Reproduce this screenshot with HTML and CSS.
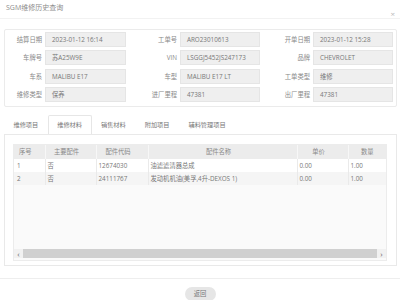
FILE: index.html
```html
<!doctype html>
<html lang="zh-CN">

<head>
    <meta charset="utf-8" />
    <title>SGM维修历史查询</title>
    <link rel="stylesheet" href="styles.css">
</head>

<body>
    <div class="dialog">
        <div class="dlg-head">
            <span class="dlg-title">SGM维修历史查询</span>
            <span class="dlg-close">&times;</span>
        </div>

        <div class="dlg-body">
            <!-- order info -->
            <div class="info-panel">
                <div class="field f1"><label>结算日期</label><div class="val">2023-01-12 16:14</div></div>
                <div class="field f2"><label>工单号</label><div class="val">ARO23010613</div></div>
                <div class="field f3"><label>开单日期</label><div class="val">2023-01-12 15:28</div></div>

                <div class="field f1"><label>车牌号</label><div class="val">苏A25W9E</div></div>
                <div class="field f2"><label>VIN</label><div class="val">LSGGJ5452JS247173</div></div>
                <div class="field f3"><label>品牌</label><div class="val">CHEVROLET</div></div>

                <div class="field f1"><label>车系</label><div class="val">MALIBU E17</div></div>
                <div class="field f2"><label>车型</label><div class="val">MALIBU E17 LT</div></div>
                <div class="field f3"><label>工单类型</label><div class="val">维修</div></div>

                <div class="field f1"><label>维修类型</label><div class="val">保养</div></div>
                <div class="field f2"><label>进厂里程</label><div class="val">47381</div></div>
                <div class="field f3"><label>出厂里程</label><div class="val">47381</div></div>
            </div>

            <!-- tabs -->
            <div class="tabs">
                <div class="tab">维修项目</div>
                <div class="tab active">维修材料</div>
                <div class="tab">销售材料</div>
                <div class="tab">附加项目</div>
                <div class="tab">辅料管理项目</div>
            </div>

            <div class="tab-pane">
                <div class="grid-wrap">
                    <table class="grid">
                        <colgroup>
                            <col class="c-no">
                            <col class="c-main">
                            <col class="c-code">
                            <col class="c-name">
                            <col class="c-price">
                            <col class="c-qty">
                        </colgroup>
                        <thead>
                            <tr>
                                <th class="h-no">序号</th>
                                <th>主要配件</th>
                                <th>配件代码</th>
                                <th>配件名称</th>
                                <th>单价</th>
                                <th class="h-qty">数量</th>
                            </tr>
                        </thead>
                        <tbody>
                            <tr>
                                <td>1</td>
                                <td>否</td>
                                <td>12674030</td>
                                <td>油滤滤清器总成</td>
                                <td>0.00</td>
                                <td>1.00</td>
                            </tr>
                            <tr class="alt">
                                <td>2</td>
                                <td>否</td>
                                <td>24111767</td>
                                <td>发动机机油(美孚,4升-DEXOS 1)</td>
                                <td>0.00</td>
                                <td>1.00</td>
                            </tr>
                        </tbody>
                    </table>
                    <div class="grid-fill"></div>
                    <div class="hscroll">
                        <span class="sb-btn">&#8249;</span>
                        <span class="sb-thumb"></span>
                        <span class="sb-btn">&#8250;</span>
                    </div>
                </div>
            </div>
        </div>

        <div class="dlg-foot">
            <button class="btn">返回</button>
        </div>
    </div>
</body>

</html>
```

FILE: styles.css
```css
html,
body {
    margin: 0;
    overflow: hidden;
    background: #fff;
}

body {
    font-family: "Open Sans", "Noto Sans CJK SC", sans-serif;
    font-size: 6.3px;
    color: #777;
}

.dialog {
    width: 400px;
}

/* Header */
.dlg-head {
    display: flex;
    justify-content: space-between;
    align-items: flex-start;
    height: 18px;
    border-bottom: 1px solid #f2f2f2;
}

.dlg-title {
    padding: 2px 0 0 6px;
    font-size: 7px;
    line-height: 12px;
    color: #8c8c8c;
}

.dlg-close {
    margin: 9px 5px 0 0;
    font-size: 8px;
    line-height: 10px;
    color: #bbb;
}

.dlg-body {
    padding: 10px 3px 0 4px;
}

/* Info panel */
.info-panel {
    display: grid;
    grid-template-columns: 121px 134px 133px;
    row-gap: 3.3px;
    padding: 2px 4px 4px 0;
    border: 1px solid #ebebeb;
    border-radius: 2px;
}

.field {
    display: flex;
    align-items: center;
    height: 15px;
}

.field label {
    text-align: right;
    padding-right: 3px;
    color: #888;
    white-space: nowrap;
}

.f1 label {
    width: 37px;
}

.f2 label {
    width: 51px;
}

.f3 label {
    width: 50px;
}

.val {
    flex: 1;
    height: 13px;
    line-height: 13px;
    padding-left: 6px;
    background: #efefef;
    border: 1px solid #e5e5e5;
    color: #777;
    white-space: nowrap;
    overflow: hidden;
}

/* Tabs */
.tabs {
    display: flex;
    margin-top: 8px;
    font-size: 6.2px;
}

.tab {
    height: 18px;
    line-height: 18px;
    padding: 0 8.5px;
    border: 1px solid transparent;
    border-bottom: none;
    color: #777;
    white-space: nowrap;
}

.tab.active {
    background: #fff;
    border-color: #e6e6e6;
    border-radius: 2px 2px 0 0;
    margin-bottom: -1px;
    position: relative;
}

.tab-pane {
    padding: 9px 9px 4px 8px;
    border: 1px solid #e9e9e9;
}

/* Grid */
.grid-wrap {
    display: flex;
    flex-direction: column;
    height: 115px;
    border: 1px solid #ececec;
    background: #fafafa;
}

.grid {
    width: 100%;
    table-layout: fixed;
    border-collapse: collapse;
    background: #fff;
}

.c-no { width: 31px; }
.c-main { width: 51px; }
.c-code { width: 52px; }
.c-name { width: 149px; }
.c-price { width: 51px; }
.c-qty { width: 38px; }

.grid th {
    height: 14px;
    padding: 0 8px 0 0;
    background: #ececec;
    border-left: 1px solid #f7f7f7;
    font-weight: normal;
    color: #888;
    text-align: center;
    white-space: nowrap;
}

.grid th.h-no {
    border-left: none;
}

.grid th.h-qty {
    padding-right: 0;
}

.grid td {
    height: 13px;
    padding: 0 0 0 2px;
    border-left: 1px solid #eaeaea;
    color: #777;
    white-space: nowrap;
    overflow: hidden;
}

.grid td:first-child {
    border-left: none;
    padding-left: 3px;
}

.grid tr.alt td {
    background: #f5f5f5;
}

.grid-fill {
    flex: 1;
}

.hscroll {
    display: flex;
    align-items: center;
    height: 9px;
    margin-bottom: 2px;
    background: #f1f1f1;
}

.sb-btn {
    width: 9px;
    text-align: center;
    font-size: 8px;
    line-height: 9px;
    color: #666;
}

.sb-thumb {
    flex: 1;
    height: 9px;
    background: #d0d0d0;
}

/* Footer */
.dlg-foot {
    display: flex;
    justify-content: center;
    margin-top: 12px;
    padding-top: 8px;
    border-top: 1px solid #eeeeee;
}

.btn {
    width: 31px;
    height: 14px;
    padding: 0;
    border: none;
    border-radius: 7px;
    background: #e6e6e6;
    font-family: inherit;
    font-size: 6.3px;
    color: #777;
}
```
